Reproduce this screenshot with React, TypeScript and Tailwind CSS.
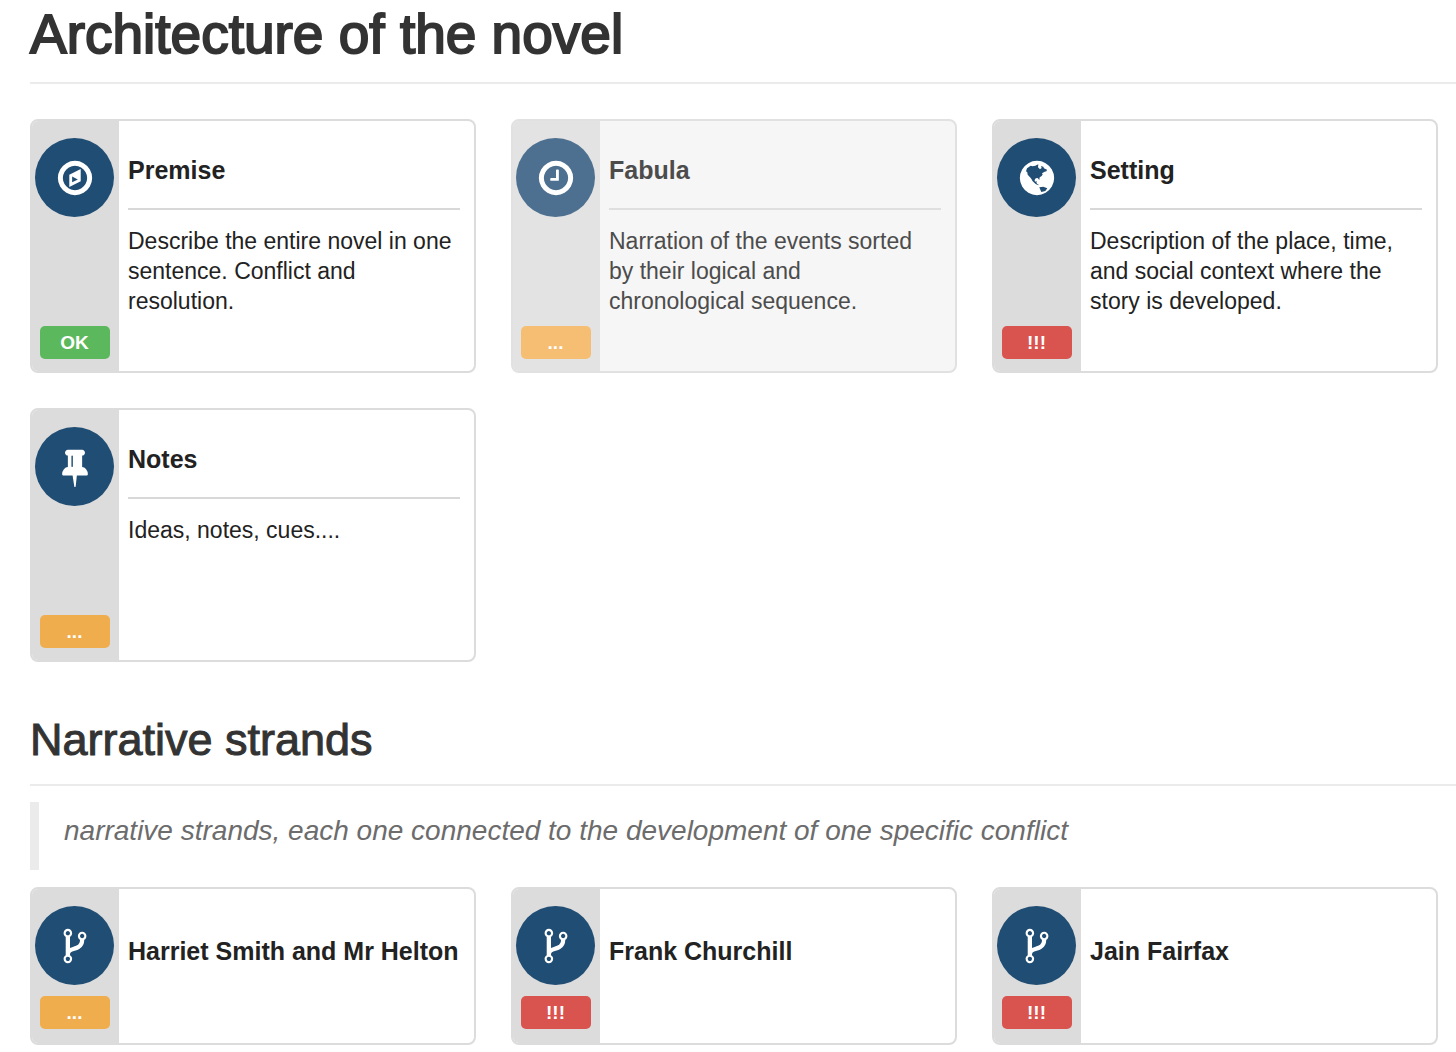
import { ReactNode } from 'react';
import clsx from 'clsx';

type Status = 'ok' | 'progress' | 'todo';
type IconName = 'compass' | 'clock' | 'globe' | 'pin' | 'fork';

interface CardInterface {
	title: string;
	icon: IconName;
	status: Status;
	description?: string;
	muted?: boolean;
}

const icons: Record<IconName, string> = {
	compass:
		'M768 1088l256-128-256-128v256zm384-593v546l-512 256v-546zm288 401q0-148-73-273t-198-198-273-73-273 73-198 198-73 273 73 273 198 198 273 73 273-73 198-198 73-273zm224 0q0 209-103 385.5t-279.5 279.5-385.5 103-385.5-103-279.5-279.5-103-385.5 103-385.5 279.5-279.5 385.5-103 385.5 103 279.5 279.5 103 385.5z',
	clock:
		'M1024 544v448q0 14-9 23t-23 9h-320q-14 0-23-9t-9-23v-64q0-14 9-23t23-9h224v-352q0-14 9-23t23-9h64q14 0 23 9t9 23zm416 352q0-148-73-273t-198-198-273-73-273 73-198 198-73 273 73 273 198 198 273 73 273-73 198-198 73-273zm224 0q0 209-103 385.5t-279.5 279.5-385.5 103-385.5-103-279.5-279.5-103-385.5 103-385.5 279.5-279.5 385.5-103 385.5 103 279.5 279.5 103 385.5z',
	globe:
		'M896 128q209 0 385.5 103t279.5 279.5 103 385.5-103 385.5-279.5 279.5-385.5 103-385.5-103-279.5-279.5-103-385.5 103-385.5 279.5-279.5 385.5-103zM404 598L449 464L613 345L700 370L822 345L956 285L941 419L1030 509L1105 449L1075 360L1179 389L1209 464L1343 524L1320 590L1239 613L1120 687L1150 740L1105 807L1015 866L1000 985L926 896L850 905L807 941L790 1010L807 1060L881 1030L870 1100L896 1149L1000 1224L900 1200L822 1149L702 1045L640 930L583 866L479 747L460 640ZM1000 1313L1179 1283L1358 1358L1269 1477L1090 1522L1045 1418Z',
	pin: 'M800 864v-448q0-14-9-23t-23-9-23 9-9 23v448q0 14 9 23t23 9 23-9 9-23zm672 352q0 26-19 45t-45 19h-429l-51 483q-2 12-10.5 20.5t-20.5 8.5h-1q-27 0-32-27l-76-485h-404q-26 0-45-19t-19-45q0-123 78.5-221.5t177.5-98.5v-512q-52 0-90-38t-38-90 38-90 90-38h640q52 0 90 38t38 90-38 90-90 38v512q99 0 177.5 98.5t78.5 221.5z',
	fork: 'M672 1472q0-40-28-68t-68-28-68 28-28 68 28 68 68 28 68-28 28-68zm0-1152q0-40-28-68t-68-28-68 28-28 68 28 68 68 28 68-28 28-68zm640 128q0-40-28-68t-68-28-68 28-28 68 28 68 68 28 68-28 28-68zm96 0q0 52-26 96.5t-70 69.5q-2 287-226 414-67 38-203 81-128 40-169.5 71t-41.5 100v26q44 25 70 69.5t26 96.5q0 80-56 136t-136 56-136-56-56-136q0-52 26-96.5t70-69.5v-820q-44-25-70-69.5t-26-96.5q0-80 56-136t136-56 136 56 56 136q0 52-26 96.5t-70 69.5v497q54-26 154-57 55-17 87.5-29.5t70.5-31 59-39.5 40.5-51 28-69.5 8.5-91.5q-44-25-70-69.5t-26-96.5q0-80 56-136t136-56 136 56 56 136z',
};

const badges: Record<Status, { text: string; color: string; mutedColor: string }> = {
	ok: { text: 'OK', color: 'bg-[#5cb85c]', mutedColor: 'bg-[#84c984]' },
	progress: { text: '...', color: 'bg-[#f0ad4e]', mutedColor: 'bg-[#f5be73]' },
	todo: { text: '!!!', color: 'bg-[#d9534f]', mutedColor: 'bg-[#e27f7c]' },
};

const sections: CardInterface[] = [
	{
		title: 'Premise',
		icon: 'compass',
		status: 'ok',
		description: 'Describe the entire novel in one sentence. Conflict and resolution.',
	},
	{
		title: 'Fabula',
		icon: 'clock',
		status: 'progress',
		description:
			'Narration of the events sorted by their logical and chronological sequence.',
		muted: true,
	},
	{
		title: 'Setting',
		icon: 'globe',
		status: 'todo',
		description:
			'Description of the place, time, and social context where the story is developed.',
	},
	{
		title: 'Notes',
		icon: 'pin',
		status: 'progress',
		description: 'Ideas, notes, cues....',
	},
];

const strands: CardInterface[] = [
	{ title: 'Harriet Smith and Mr Helton', icon: 'fork', status: 'progress' },
	{ title: 'Frank Churchill', icon: 'fork', status: 'todo' },
	{ title: 'Jain Fairfax', icon: 'fork', status: 'todo' },
];

function Card({ title, icon, status, description, muted = false }: CardInterface) {
	const badge = badges[status];

	return (
		<article
			className={clsx(
				'flex overflow-hidden rounded-lg border-2',
				description ? 'min-h-[254px]' : 'min-h-[158px]',
				muted
					? 'border-[#e1e1e1] bg-[#f6f6f6] text-[#4c4c4c]'
					: 'border-[#dcdcdc] bg-white text-[#222]'
			)}
		>
			<div
				className={clsx(
					'flex w-[87px] shrink-0 flex-col items-center justify-between pt-[17px] pr-0.5',
					description ? 'pb-3' : 'pb-3.5',
					muted ? 'bg-[#e3e3e3]' : 'bg-[#dcdcdc]'
				)}
			>
				<div
					className={clsx(
						'flex size-[79px] items-center justify-center rounded-full',
						muted ? 'bg-[#4d7090]' : 'bg-[#204d74]'
					)}
				>
					<svg
						viewBox="0 0 1792 1792"
						className="size-10"
						fill="white"
						fillRule={icon === 'compass' || icon === 'globe' ? 'evenodd' : 'nonzero'}
						aria-hidden="true"
					>
						<path d={icons[icon]} />
					</svg>
				</div>
				<span
					className={clsx(
						'h-[33px] w-[70px] rounded-[5px] text-center text-[19px] leading-[33px] font-bold text-white',
						muted ? badge.mutedColor : badge.color
					)}
				>
					{badge.text}
				</span>
			</div>
			<div className={clsx('min-w-0 flex-1 pr-3.5 pl-[9px]', description ? 'pt-[35px]' : 'pt-12')}>
				<h3 className="text-[25px] leading-7 font-bold">{title}</h3>
				{description && (
					<p
						className={clsx(
							'mt-6 border-t-2 pt-4 text-[23px] leading-[30px]',
							muted ? 'border-[#dfdfdf]' : 'border-[#d8d8d8]'
						)}
					>
						{description}
					</p>
				)}
			</div>
		</article>
	);
}

function Grid({ children }: { children: ReactNode }) {
	return <div className="mr-[18px] grid grid-cols-3 gap-[35px]">{children}</div>;
}

export default function App() {
	return (
		<main className="bg-white pb-[7px] pl-[30px] font-['Liberation_Sans',Arial,sans-serif] text-[#333]">
			<h1 className="mb-[35px] border-b-2 border-[#ebebeb] pt-1 pb-[18px] text-[55px] leading-[60px] font-medium [-webkit-text-stroke:2px]">
				Architecture of the novel
			</h1>
			<Grid>
				{sections.map((section) => (
					<Card key={section.title} {...section} />
				))}
			</Grid>
			<h2 className="mt-[53px] mb-4 border-b-2 border-[#ebebeb] pb-[19px] text-[45px] leading-[50px] font-medium [-webkit-text-stroke:1px]">
				Narrative strands
			</h2>
			<blockquote className="mb-[17px] border-l-[9px] border-[#ebebeb] pt-[11px] pb-[21px] pl-[25px] text-[28px] leading-9 text-[#6c6c6c] italic">
				narrative strands, each one connected to the development of one specific conflict
			</blockquote>
			<Grid>
				{strands.map((strand) => (
					<Card key={strand.title} {...strand} />
				))}
			</Grid>
		</main>
	);
}
